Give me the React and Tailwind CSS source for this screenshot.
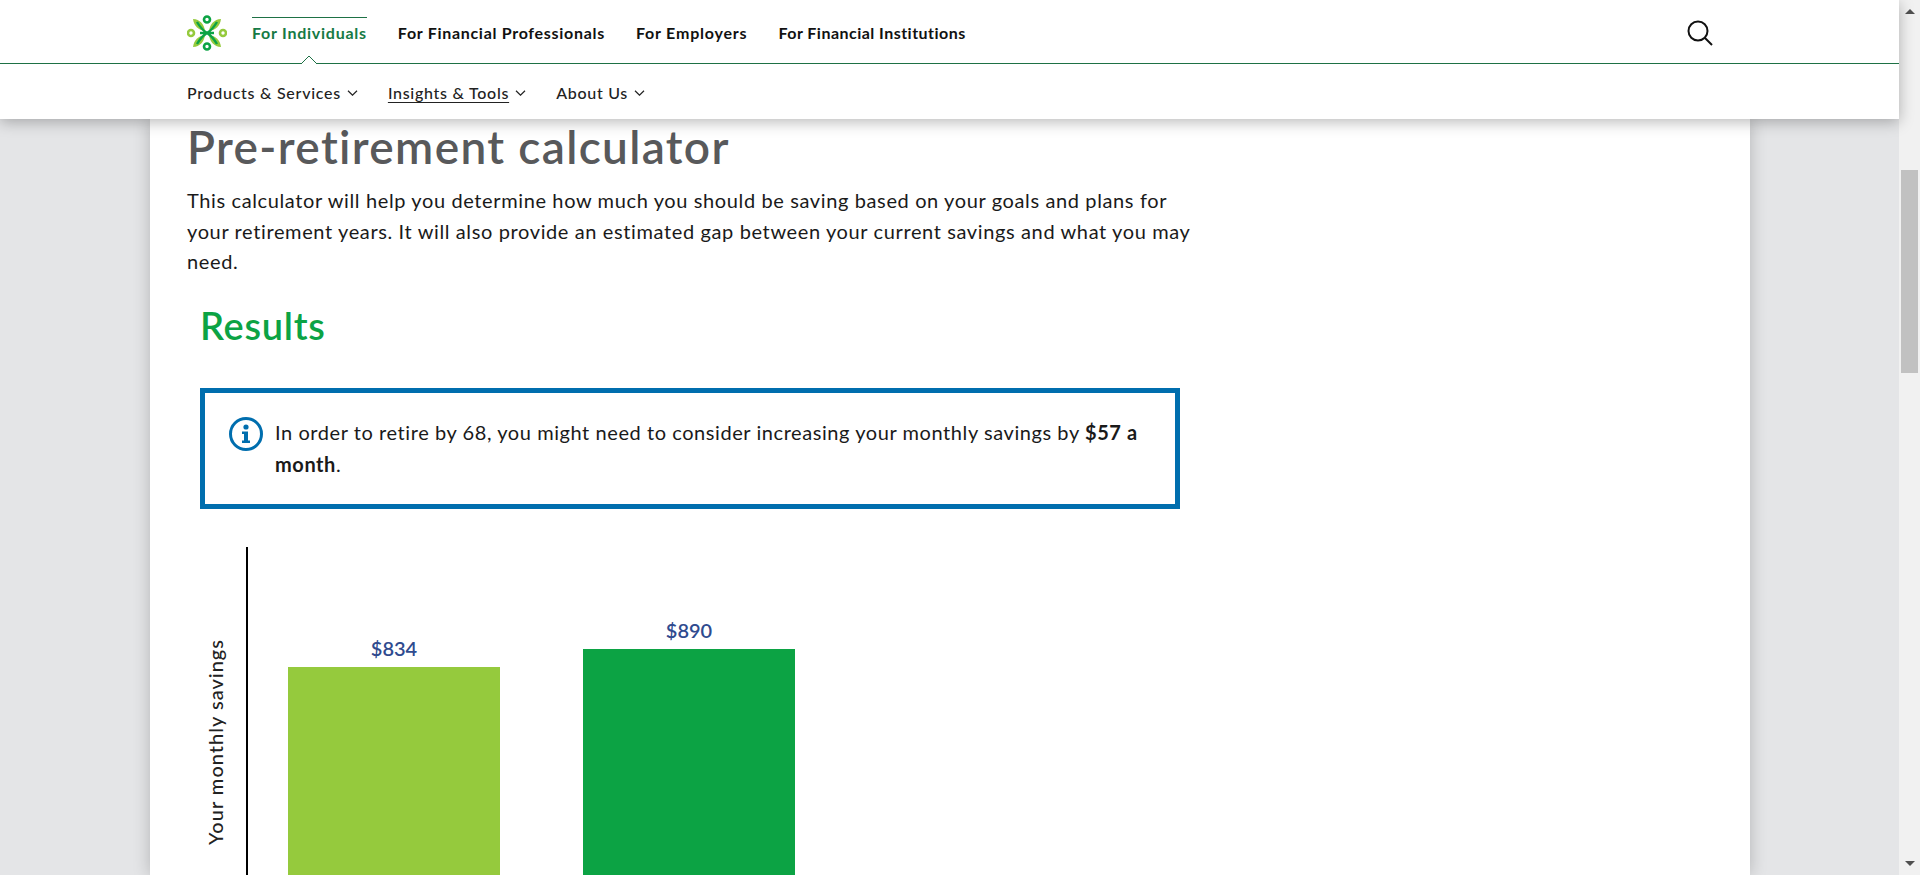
const font = "font-['Lato','Open_Sans',sans-serif]";

const topLinks = [
  { label: 'For Individuals', active: true, tracking: 'tracking-[0.75px]' },
  { label: 'For Financial Professionals', tracking: 'tracking-[0.7px]' },
  { label: 'For Employers', tracking: 'tracking-[0.8px]' },
  { label: 'For Financial Institutions', tracking: 'tracking-[0.47px]' },
];

const subLinks = [
  { label: 'Products & Services' },
  { label: 'Insights & Tools', underline: true },
  { label: 'About Us' },
];

function Logo() {
  return (
    <svg viewBox="0 0 40 36" className="h-[36px] w-[40px]" fill="none">
      <circle cx="20" cy="4.500" r="3" stroke="#0ca344" strokeWidth="2.6" />
      <circle cx="20" cy="31.500" r="3" stroke="#0ca344" strokeWidth="2.6" />
      <circle cx="4" cy="18" r="3" stroke="#95ca3d" strokeWidth="2.6" />
      <circle cx="36" cy="18" r="3" stroke="#95ca3d" strokeWidth="2.6" />
      <path d="M6 4c7 .5 11 5 12 12-7-1-11-5-12-12z" fill="#95ca3d" />
      <path d="M34 4c-7 .5-11 5-12 12 7-1 11-5 12-12z" fill="#95ca3d" />
      <path d="M6 32c7-.5 11-5 12-12-7 1-11 5-12 12z" fill="#95ca3d" />
      <path d="M34 32c-7-.5-11-5-12-12 7 1 11 5 12 12z" fill="#95ca3d" />
      <path
        d="M10 7c3 5 6 8.500 10 11 4-2.500 7-6 10-11M10 29c3-5 6-8.500 10-11 4 2.500 7 6 10 11M13 18h14"
        stroke="#0ca344"
        strokeWidth="2.4"
      />
    </svg>
  );
}

function Chevron() {
  return (
    <svg viewBox="0 0 11 6" className="h-[6px] w-[11px]" fill="none" stroke="#222" strokeWidth="1.2">
      <path d="M1 .8l4.500 4.400L10 .8" />
    </svg>
  );
}

function Header() {
  return (
    <header className="relative z-10 bg-white shadow-[0_3px_14px_rgba(0,0,0,0.28)]">
      <div className="relative h-[64px] border-b border-[#1e7145]">
        <div className="ml-[150px] flex h-full w-[1600px] items-center px-[37px] pt-[2px]">
          <Logo />
          <nav className="ml-[25px] flex h-full items-center gap-[31px]">
            {topLinks.map((l) => (
              <a
                key={l.label}
                className={`relative text-[16px] font-bold ${l.tracking} ${
                  l.active ? 'text-[#167a45]' : 'text-[#111]'
                }`}
              >
                {l.active && <span className="absolute -top-[4px] left-0 h-px w-full bg-[#1e7145]" />}
                {l.label}
                {l.active && (
                  <svg viewBox="0 0 18 9" className="absolute -bottom-[19px] left-[48px] h-[9px] w-[18px]">
                    <path d="M0 9h1l8-8 8 8h1" fill="white" stroke="#1e7145" strokeWidth="1" />
                  </svg>
                )}
              </a>
            ))}
          </nav>
          <svg viewBox="0 0 26 26" className="ml-auto h-[26px] w-[26px]" fill="none" stroke="#111" strokeWidth="2">
            <circle cx="11" cy="11" r="9.5" />
            <path d="M18 18l7 7" />
          </svg>
        </div>
      </div>
      <div className="ml-[150px] flex h-[55px] w-[1600px] items-center gap-[30px] px-[37px] pt-[3px]">
        {subLinks.map((l) => (
          <a key={l.label} className="flex items-center gap-[6px] text-[16px] font-medium tracking-[0.72px] text-[#222]">
            <span className={l.underline ? 'underline underline-offset-[3px]' : ''}>{l.label}</span>
            <Chevron />
          </a>
        ))}
      </div>
    </header>
  );
}

function Chart() {
  return (
    <div className="ml-[13px] mt-[38px] flex h-[400px] items-start">
      <div className="flex h-full w-[46px] items-center justify-center pb-[8px] pr-[16px]">
        <span className="rotate-180 text-[20px] font-medium tracking-[1px] text-[#222] [writing-mode:vertical-rl]">
          Your monthly savings
        </span>
      </div>
      <div className="flex h-full items-end gap-[83px] border-l-2 border-black pl-[40px]">
        <div className="w-[212px]">
          <p className="mb-[4px] text-center text-[20px] font-semibold text-[#2f4b8f]">$834</p>
          <div className="h-[280px] bg-[#95ca3d]" />
        </div>
        <div className="w-[212px]">
          <p className="mb-[4px] text-center text-[20px] font-semibold text-[#2f4b8f]">$890</p>
          <div className="h-[298px] bg-[#0ca344]" />
        </div>
      </div>
    </div>
  );
}

function Scrollbar() {
  return (
    <div className="flex h-full w-[21px] flex-col items-center bg-[#f1f1f1]">
      <div className="mt-[9px] h-0 w-0 border-x-[5px] border-b-[5px] border-x-transparent border-b-[#505050]" />
      <div className="mt-[156px] h-[203px] w-[17px] bg-[#c1c1c1]" />
      <div className="mt-auto mb-[9px] h-0 w-0 border-x-[5px] border-t-[5px] border-x-transparent border-t-[#505050]" />
    </div>
  );
}

export default function App() {
  return (
    <div className={`flex h-[875px] overflow-hidden bg-[#e4e5e7] ${font}`}>
      <div className="flex min-w-0 flex-1 flex-col">
        <Header />
        <main className="ml-[150px] w-[1600px] flex-1 overflow-hidden bg-white px-[37px] shadow-[0_0_16px_rgba(0,0,0,0.22)]">
          <h1 className="text-[46px] font-semibold leading-[56px] tracking-[1.35px] text-[#58595b]">
            Pre-retirement calculator
          </h1>
          <p className="mt-[10px] w-[1015px] text-[20px] leading-[30.5px] tracking-[0.62px] text-[#1a1a1a]">
            This calculator will help you determine how much you should be saving based on your goals and plans for your
            retirement years. It will also provide an estimated gap between your current savings and what you may need.
          </p>
          <h2 className="ml-[13px] mt-[23px] text-[38px] font-semibold leading-[50px] tracking-[0.7px] text-[#0ca344]">
            Results
          </h2>
          <div className="ml-[13px] mt-[38px] flex h-[121px] w-[980px] items-start border-[5px] border-[#006eae] pl-[24px] pr-[30px] pt-[24px]">
            <svg viewBox="0 0 34 34" className="h-[34px] w-[34px] shrink-0" fill="none">
              <circle cx="17" cy="17" r="15.5" stroke="#006eae" strokeWidth="3" />
              <circle cx="17" cy="10" r="2.6" fill="#006eae" />
              <path d="M13 14.5h6v9h2v2.500h-8v-2.500h2v-6.500h-2z" fill="#006eae" />
            </svg>
            <p className="-mt-px ml-[12px] text-[20px] leading-[32px] tracking-[0.57px] text-[#1a1a1a]">
              In order to retire by 68, you might need to consider increasing your monthly savings by{' '}
              <strong className="font-bold">$57 a month</strong>.
            </p>
          </div>
          <Chart />
        </main>
      </div>
      <Scrollbar />
    </div>
  );
}
